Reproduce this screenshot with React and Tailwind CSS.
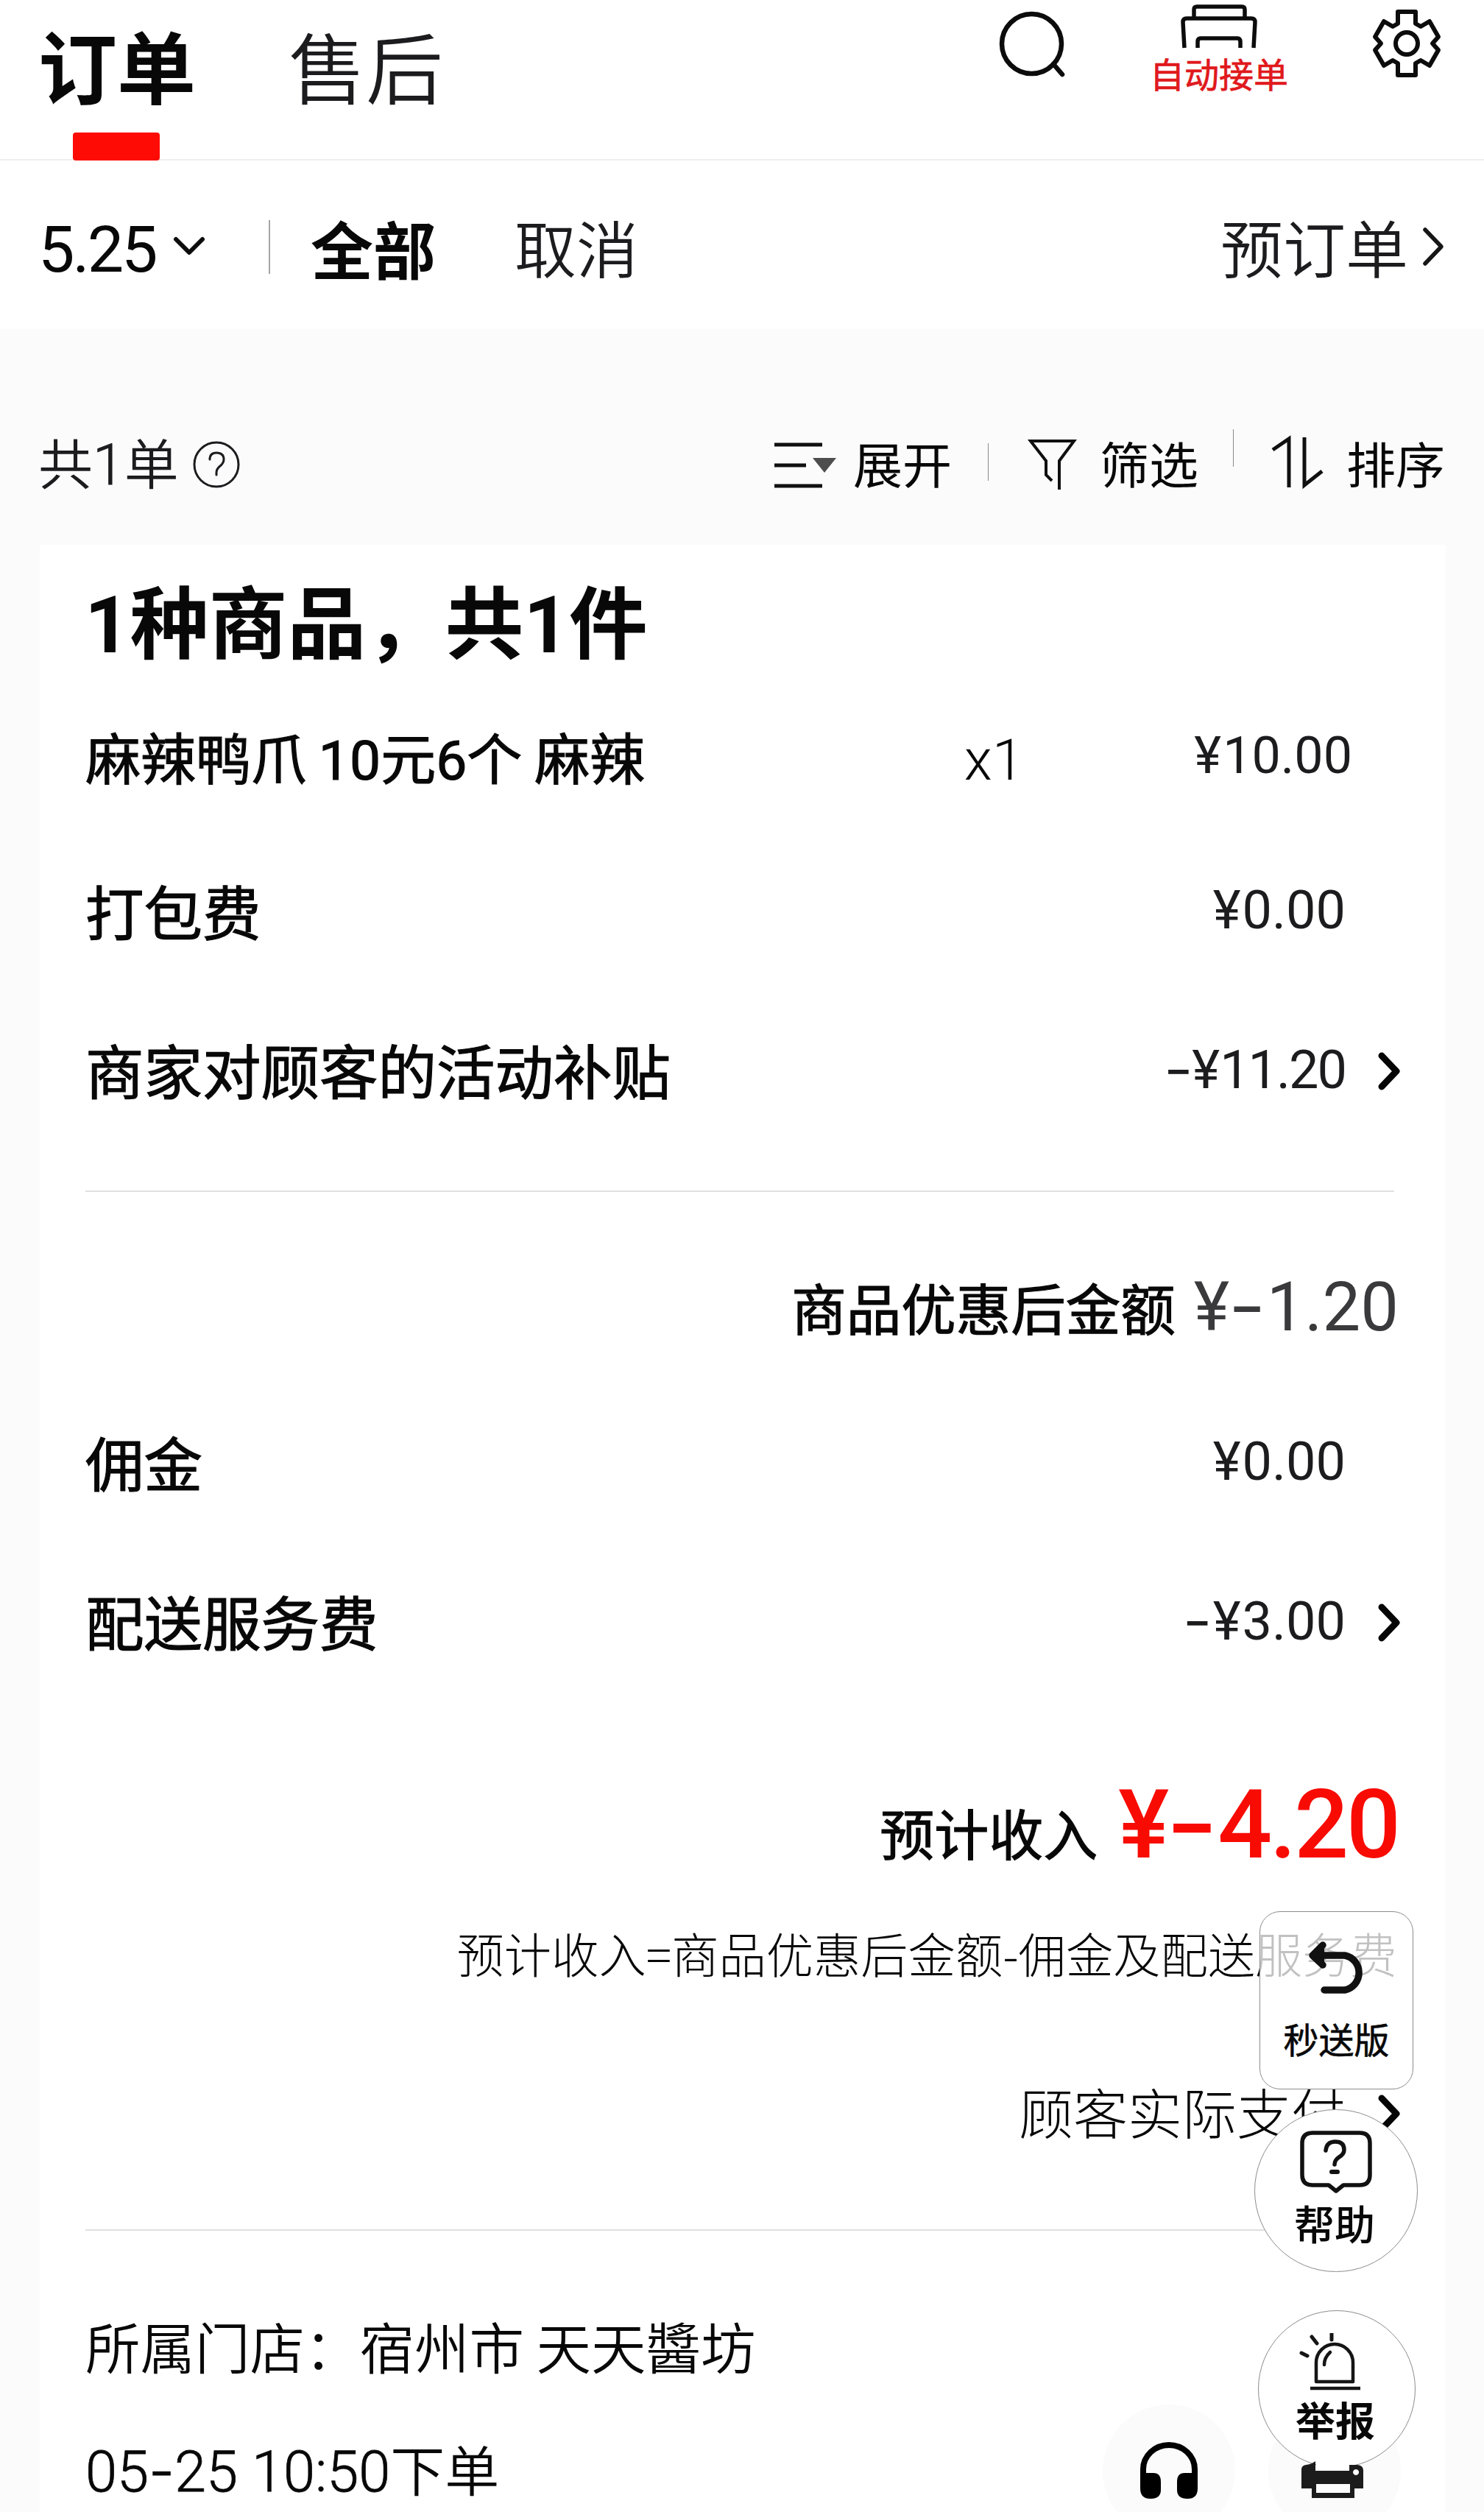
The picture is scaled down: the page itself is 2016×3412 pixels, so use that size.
import React from "react";

function Num({ children, className = "" }) {
  return <span className={`font-[Roboto] leading-[0] ${className}`}>{children}</span>;
}

function Chevron() {
  return (
    <svg width="34" height="54" viewBox="0 0 34 54" fill="none">
      <path d="M7 6L27 27L7 48" stroke="#050505" strokeWidth="9" strokeLinecap="round" strokeLinejoin="round" />
    </svg>
  );
}

// The minus sign is wider than Roboto's hyphen, so it is set in Inter
function Minus() {
  return <span className="mr-[0.06em] inline-block scale-x-120 font-[Inter]">-</span>;
}

function Price({ minus, lead, value, className }) {
  return (
    <span className={`font-[Roboto] leading-none whitespace-nowrap ${className}`}>
      {lead && <Minus />}
      <span className="mr-[0.03em]">¥</span>
      {minus && <Minus />}
      {value}
    </span>
  );
}

function FeeRow({ label, value, lead, arrow, className, priceClass = "" }) {
  return (
    <div className={`flex h-[110px] items-center ${className}`}>
      <span className="text-[79.5px] leading-none font-normal [-webkit-text-stroke:1.2px]">{label}</span>
      <Price lead={lead} value={value} className={`mt-[2px] ml-auto text-[72px] text-[#1c1c1e] ${priceClass}`} />
      <span className="mt-[5px] flex w-[76px] justify-end">{arrow && <Chevron />}</span>
    </div>
  );
}

function Header() {
  return (
    <header className="flex h-[218px] items-start border-b-2 border-[#efefef] bg-white pl-[52px] pr-[56px]">
      <div className="pt-[33px]">
        <h1 className="text-[107px] leading-none font-bold">订单</h1>
        <div className="mt-[40px] ml-[47px] h-[38px] w-[118px] rounded-[4px] bg-[#fd0b04]" />
      </div>
      <span className="mt-[35px] ml-[126px] text-[105px] leading-none font-[350] text-[#1c1c1f]">售后</span>

      <svg className="mt-[14px] ml-auto" width="92" height="92" viewBox="0 0 92 92" fill="none" stroke="#0c0c0c">
        <circle cx="45.5" cy="45.5" r="40.5" strokeWidth="6.5" />
        <path d="M75 73L87 87" strokeWidth="6.5" strokeLinecap="round" />
      </svg>
      <div className="ml-[114px] flex w-[188px] flex-col items-center pt-[4px]">
        <svg width="108" height="62" viewBox="0 0 108 62" fill="none" stroke="#0c0c0c" strokeWidth="5.5">
          <path d="M20 20V9q0-4 4-4H85q4 0 4 4V20" />
          <path d="M7 61L5 26q0-5 5-5H98q5 0 5 5L101 61" />
          <path d="M25 61V53q0-5 4-5H79q4 0 4 5V61" />
        </svg>
        <span className="mt-[9px] text-[47px] leading-none whitespace-nowrap text-[#e0191c] [-webkit-text-stroke:0.7px]">自动接单</span>
      </div>
      <svg className="mt-[10px] ml-[112px]" width="98" height="98" viewBox="0 0 98 98" fill="none" stroke="#0c0c0c" strokeWidth="6" strokeLinejoin="round">
        <path d="M37 6H61V22L68 26L80 19L92 40L84 49L92 58L80 79L68 72L61 76V92H37V76L30 72L18 79L6 58L14 49L6 40L18 19L30 26L37 22Z" />
        <circle cx="49" cy="49" r="15" />
      </svg>
    </header>
  );
}

function FilterBar() {
  return (
    <div className="flex h-[229px] items-center bg-white pt-[5px] pl-[52px] pr-[52px]">
      <span className="mt-[8px] w-[170px] font-[Roboto] text-[88px] leading-none tracking-[-3px]">5.25</span>
      <svg className="ml-[11px]" width="48" height="30" viewBox="0 0 48 30" fill="none">
        <path d="M6 5L24 23L42 5" stroke="#0c0c0c" strokeWidth="6" strokeLinecap="round" strokeLinejoin="round" />
      </svg>
      <div className="ml-[84px] h-[73px] w-[2px] bg-[#a5a5a5]" />
      <span className="ml-[55px] text-[85px] leading-none font-bold">全部</span>
      <span className="ml-[107px] text-[84px] leading-none font-[350] text-[#1c1c1f]">取消</span>
      <span className="mb-[4px] ml-auto text-[85px] leading-none font-[350] text-[#1c1c1f]">预订单</span>
      <svg className="ml-[17px]" width="34" height="56" viewBox="0 0 34 56" fill="none">
        <path d="M6 5L28 28L6 51" stroke="#161616" strokeWidth="5.5" strokeLinecap="round" strokeLinejoin="round" />
      </svg>
    </div>
  );
}

function Toolbar() {
  return (
    <div className="flex h-[293px] items-center bg-[#fbfbfb] pt-[68px] pl-[52px] pr-[53px]">
      <span className="mb-[4px] text-[74px] leading-none font-[350] text-[#1c1c1f]">
        共<Num className="text-[77px] font-light [-webkit-text-stroke:0.8px]">1</Num>单
      </span>
      <svg className="mt-[6px] ml-[18px]" width="66" height="66" viewBox="0 0 66 66" fill="none" stroke="#1c1c1f" strokeWidth="3">
        <circle cx="33" cy="33" r="30" />
        <path d="M24 26q0-9 9-9q10 0 10 9q0 5-5 9q-5 4-5 9V47" strokeLinecap="round" />
      </svg>

      <svg className="mt-[8px] ml-auto" width="88" height="64" viewBox="0 0 88 64">
        <path d="M2 4H67M2 32H45M2 60H67" stroke="#101010" strokeWidth="5" />
        <path d="M54 22H86L70 42Z" fill="#4d4d4d" />
      </svg>
      <span className="ml-[21px] text-[67px] leading-none font-normal">展开</span>
      <div className="ml-[49px] h-[51px] w-[1px] bg-[#8a8a8a]" />
      <svg className="mt-[6px] ml-[52px]" width="68" height="72" viewBox="0 0 68 72" fill="none" stroke="#101010" strokeWidth="4">
        <path d="M34 58L26 50V31L5 4H64L44 31V70" />
      </svg>
      <span className="ml-[31px] text-[67px] leading-none font-normal">筛选</span>
      <div className="mb-[38px] ml-[47px] h-[51px] w-[1px] bg-[#8a8a8a]" />
      <svg className="ml-[49px]" width="75" height="74" viewBox="0 0 75 74" fill="none" stroke="#101010" strokeWidth="5">
        <path d="M4 20L26 5V71" />
        <path d="M47 3V68L71 49" />
      </svg>
      <span className="ml-[29px] text-[67px] leading-none font-normal">排序</span>
    </div>
  );
}

function OrderCard() {
  return (
    <section className="mr-[52px] ml-[54px] h-[2672px] bg-white pt-[46px] pr-[60px] pl-[62px]">
      <h2 className="-ml-[1px] text-[107px] leading-none font-bold">
        <Num>1</Num>种商品，共<Num>1</Num>件
      </h2>

      <div className="mt-[78px] flex h-[110px] items-center">
        <span className="text-[75px] leading-none font-normal whitespace-nowrap [-webkit-text-stroke:1.2px]">
          麻辣鸭爪 <Num>10</Num>元<Num>6</Num>个 麻辣
        </span>
        <span className="mt-[14px] ml-auto font-[Roboto] text-[78px] leading-none font-light">x1</span>
        <Price value="10.00" className="w-[446px] text-right text-[70px] text-[#1c1c1e]" />
        <span className="w-[67px]" />
      </div>
      <FeeRow className="mt-[100px]" label="打包费" value="0.00" />
      <FeeRow className="mt-[106px]" label="商家对顾客的活动补贴" value="11.20" lead arrow priceClass="tracking-[-2px]" />

      <div className="mt-[110px] mr-[10px] h-[2px] bg-[#dfdfdf]" />

      <div className="mt-[101px] mr-[4px] flex h-[110px] items-center justify-end">
        <span className="text-[74.5px] leading-none font-normal [-webkit-text-stroke:1.2px]">商品优惠后金额</span>
        <Price minus value="1.20" className="ml-[25px] text-[92px] text-[#3a3a3c]" />
      </div>
      <FeeRow className="mt-[100px]" label="佣金" value="0.00" />
      <FeeRow className="mt-[106px]" label="配送服务费" value="3.00" lead arrow />

      <div className="mt-[177px] mr-[4px] flex h-[110px] items-center justify-end">
        <span className="text-[74px] leading-none font-normal [-webkit-text-stroke:1.2px]">预计收入</span>
        <Price minus value="4.20" className="mb-[22px] ml-[28px] text-[130px] font-medium tracking-[-3px] text-[#f80b02]" />
      </div>
      <div className="mt-[54px] mr-[6px] flex h-[110px] items-center justify-end text-[64.3px] leading-none font-light">
        预计收入=商品优惠后金额-佣金及配送服务费
      </div>
      <div className="mt-[105px] flex h-[110px] items-center justify-end text-[74px] leading-none font-light">
        顾客实际支付
        <span className="mt-[8px] flex w-[76px] justify-end">
          <Chevron />
        </span>
      </div>

      <div className="mt-[106px] mr-[10px] h-[2px] bg-[#dfdfdf]" />

      <div className="mt-[101px] flex h-[110px] items-center text-[74.5px] leading-none font-[350] whitespace-pre">
        所属门店：宿州市 天天醬坊
      </div>
      <div className="mt-[56px] flex h-[110px] items-center text-[74px] leading-none font-[350]">
        <span>
          <Num className="text-[77.5px] font-light [-webkit-text-stroke:0.8px]">
            05<span className="font-[Inter]">-</span>25 10:50
          </Num>
          下单
        </span>
      </div>
    </section>
  );
}

function FloatingButtons() {
  return (
    <>
      <div className="absolute top-[3266px] left-[1498px] flex h-[180px] w-[180px] justify-center rounded-full bg-[#fbfbfb] pt-[50px]">
        <svg width="78" height="80" viewBox="0 0 78 80">
          <path d="M4 46V38a35 33 0 0 1 70 0V46" fill="none" stroke="#000" strokeWidth="8" />
          <path d="M0 43H18q10 0 10 12V66q0 12-14 12T0 64ZM78 43H60q-10 0-10 12V66q0 12 14 12T78 64Z" />
        </svg>
      </div>
      <div className="absolute top-[3266px] left-[1723px] h-[180px] w-[180px] rounded-full bg-[#fbfbfb]" />

      {/* Switch back to the quick delivery version */}
      <div className="absolute top-[2596px] left-[1711px] flex h-[242px] w-[209px] flex-col items-center rounded-[28px] border border-[#8c8c8c] bg-white/75 pt-[38px]">
        <svg width="82" height="76" viewBox="0 0 82 76" fill="none" stroke="#111" strokeWidth="9.5" strokeLinecap="round" strokeLinejoin="round">
          <path d="M22 7L8 21L22 34" />
          <path d="M10 21H52a24 24 0 0 1 0 47H24" />
          <path d="M21 9L8 21L21 32Z" fill="#111" strokeWidth="6" />
        </svg>
        <span className="mt-[33px] text-[48px] leading-none font-normal [-webkit-text-stroke:0.6px]">秒送版</span>
      </div>

      <div className="absolute top-[2865px] left-[1704px] flex h-[221px] w-[222px] flex-col items-center rounded-full border border-[#8c8c8c] bg-white pt-[27px]">
        <svg width="100" height="90" viewBox="0 0 100 90" fill="none" stroke="#111">
          <path d="M18 4H82q14 0 14 14V61q0 14-14 14H60L50 83L40 75H18q-14 0-14-14V18q0-14 14-14Z" strokeWidth="5.5" strokeLinejoin="round" />
          <path d="M36 28q1-12 13-12q12 0 12 11q0 6-7 10q-6 4-6 10" strokeWidth="5.5" strokeLinecap="round" />
          <path d="M44 57H52" strokeWidth="6" strokeLinecap="round" />
        </svg>
        <span className="mt-[8px] mr-[4px] text-[55px] leading-none font-medium">帮助</span>
      </div>

      <div className="absolute top-[3138px] left-[1709px] flex h-[214px] w-[214px] flex-col items-center rounded-full border border-[#8c8c8c] bg-white pt-[30px]">
        <svg className="-ml-[14px]" width="90" height="78" viewBox="0 0 90 78" fill="none" stroke="#151515" strokeWidth="4.5">
          <path d="M24 66V40a25 25 0 0 1 50 0V66Z" strokeLinejoin="round" />
          <path d="M16 75H84" />
          <path d="M45 -1V9M18 5L25 14M4 27L12 31" strokeWidth="5" strokeLinecap="round" />
          <path d="M35 43q0-10 8-17" strokeLinecap="round" />
        </svg>
        <span className="mt-[12px] mr-[4px] text-[54px] leading-none font-bold">举报</span>
      </div>

      <svg className="absolute top-[3340px] left-[1768px]" width="85" height="54" viewBox="0 0 85 54">
        <rect x="20" y="0" width="46" height="14" fill="#fff" />
        <path
          d="M0 14Q0 9 6 8Q14 7 19 3V16H65V8H76Q84 9 84 15V40H72V53H14V40H0ZM20 34V46H66V34ZM74 14a4 4 0 1 0 .1 0Z"
          fill="#1c1c1c"
          fillRule="evenodd"
        />
      </svg>
    </>
  );
}

export default function App() {
  return (
    <main className="relative h-[3412px] w-[2016px] overflow-hidden bg-[#fbfbfb] font-['Noto_Sans_CJK_SC',sans-serif] text-[#080808]">
      <Header />
      <FilterBar />
      <Toolbar />
      <OrderCard />
      <FloatingButtons />
    </main>
  );
}
